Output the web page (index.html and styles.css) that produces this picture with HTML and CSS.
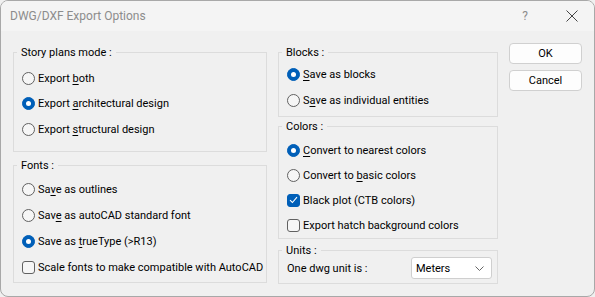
FILE: index.html
```html
<!DOCTYPE html>
<html lang="en">
<head>
  <meta charset="UTF-8">
  <title>DWG/DXF Export Options</title>
  <link rel="stylesheet" href="styles.css">
</head>
<body>
  <div class="dialog">
    <div class="titlebar">
      <span class="title">DWG/DXF Export Options</span>
      <span class="help">?</span>
      <svg class="close" width="12" height="12" viewBox="0 0 12 12">
        <path d="M0.5 0.5 L11.5 11.5 M11.5 0.5 L0.5 11.5" stroke="#444" stroke-width="1" fill="none"/>
      </svg>
    </div>

    <div class="content">
      <div class="col col-left">
        <fieldset class="group story">
          <legend>Story plans mode :</legend>
          <div class="opt"><span class="radio"></span><span>Export <u>b</u>oth</span></div>
          <div class="opt"><span class="radio on"></span><span>Export <u>a</u>rchitectural design</span></div>
          <div class="opt"><span class="radio"></span><span>Export <u>s</u>tructural design</span></div>
        </fieldset>

        <fieldset class="group fonts">
          <legend>Fonts :</legend>
          <div class="opt"><span class="radio"></span><span>Sa<u>v</u>e as outlines</span></div>
          <div class="opt"><span class="radio"></span><span>Sav<u>e</u> as autoCAD standard font</span></div>
          <div class="opt"><span class="radio on"></span><span>Save as <u>t</u>rueType (&gt;R13)</span></div>
          <div class="opt"><span class="check"></span><span>Scale fonts to make compatible with AutoCAD</span></div>
        </fieldset>
      </div>

      <div class="col col-right">
        <fieldset class="group blocks">
          <legend>Blocks :</legend>
          <div class="opt"><span class="radio on"></span><span><u>S</u>ave as blocks</span></div>
          <div class="opt"><span class="radio"></span><span>S<u>a</u>ve as individual entities</span></div>
        </fieldset>

        <fieldset class="group colors">
          <legend>Colors :</legend>
          <div class="opt"><span class="radio on"></span><span><u>C</u>onvert to nearest colors</span></div>
          <div class="opt"><span class="radio"></span><span>Convert to <u>b</u>asic colors</span></div>
          <div class="opt"><span class="check on">
            <svg width="9" height="8" viewBox="0 0 9 8"><path d="M1 4.2 L3.4 6.5 L8 1.2" stroke="#fff" stroke-width="1.1" fill="none"/></svg>
          </span><span>Black plot (CTB colors)</span></div>
          <div class="opt"><span class="check"></span><span>Export hatch background colors</span></div>
        </fieldset>

        <fieldset class="group units">
          <legend>Units :</legend>
          <div class="unit-row">
            <span>One dwg unit is :</span>
            <div class="select">
              <span>Meters</span>
              <svg width="9" height="5" viewBox="0 0 9 5"><path d="M0.5 0.5 L4.5 4.5 L8.5 0.5" stroke="#666" stroke-width="1" fill="none"/></svg>
            </div>
          </div>
        </fieldset>
      </div>

      <div class="col col-buttons">
        <button class="btn">OK</button>
        <button class="btn">Cancel</button>
      </div>
    </div>
  </div>
</body>
</html>
```

FILE: styles.css
```css
body {
  margin: 0;
  font-family: Roboto, "Liberation Sans", sans-serif;
  font-size: 11px;
  color: #000;
  background: #f0f0f0;
}
.dialog {
  width: 595px;
  height: 297px;
  box-sizing: border-box;
  border: 1px solid #a8a8a8;
  border-radius: 8px;
  background: #f0f0f0;
  overflow: hidden;
}
.titlebar {
  display: flex;
  align-items: center;
  height: 30px;
  padding-left: 9px;
  background: #f4f4f4;
}
.title {
  flex-grow: 1;
  font-size: 12px;
  color: #8c8c8c;
}
.help {
  font-size: 12px;
  color: #8c8c8c;
  margin-right: 38px;
}
.close {
  margin-right: 16px;
}
.content {
  display: flex;
  gap: 11px;
  padding: 14px 0 0 12px;
}
.col {
  display: flex;
  flex-direction: column;
}
.col-left {
  width: 254px;
}
.col-right {
  width: 220px;
}
.col-buttons {
  width: 73px;
  gap: 6px;
  margin-top: -2px;
}
.group {
  margin: 0;
  padding: 0 0 0 8px;
  border: 1px solid #dcdcdc;
  display: flex;
  flex-direction: column;
  min-width: 0;
}
.group legend {
  line-height: 15px;
  padding: 0 4px;
  margin-left: -5px;
}
.opt {
  display: flex;
  align-items: center;
  height: 16px;
  white-space: nowrap;
}
.radio,
.check {
  width: 13px;
  height: 13px;
  box-sizing: border-box;
  margin-right: 3px;
  flex-shrink: 0;
  display: flex;
  align-items: center;
  justify-content: center;
}
.radio {
  border: 1px solid #616161;
  border-radius: 50%;
  background: #f6f6f6;
}
.radio.on {
  border-color: #005fb8;
  background: #005fb8;
}
.radio.on::after {
  content: "";
  width: 5px;
  height: 5px;
  border-radius: 50%;
  background: #fff;
}
.check {
  border: 1px solid #616161;
  border-radius: 3px;
  background: #f6f6f6;
}
.check.on {
  border-color: #005fb8;
  background: #005fb8;
}
u {
  text-underline-offset: 2px;
}

.story {
  gap: 9.5px;
  padding-top: 10px;
  padding-bottom: 14px;
}
.fonts {
  margin-top: 6px;
  gap: 10px;
  padding-top: 8px;
  padding-bottom: 7px;
}
.blocks {
  gap: 10px;
  padding-top: 6px;
  padding-bottom: 8px;
}
.colors {
  margin-top: 2px;
  gap: 9px;
  padding-top: 8px;
  padding-bottom: 5px;
}
.units {
  margin-top: 4px;
  padding-bottom: 4px;
}
.unit-row {
  display: flex;
  align-items: center;
  justify-content: space-between;
  margin-top: -1px;
  padding-right: 5px;
}
.select {
  width: 81px;
  height: 22px;
  box-sizing: border-box;
  display: flex;
  align-items: center;
  justify-content: space-between;
  padding: 0 7px 0 4px;
  background: #fff;
  border: 1px solid #cfcfcf;
  border-radius: 3px;
}
.btn {
  height: 21px;
  padding: 0;
  font-family: inherit;
  font-size: 11px;
  color: #000;
  background: #fdfdfd;
  border: 1px solid #d0d0d0;
  border-radius: 4px;
}
```
